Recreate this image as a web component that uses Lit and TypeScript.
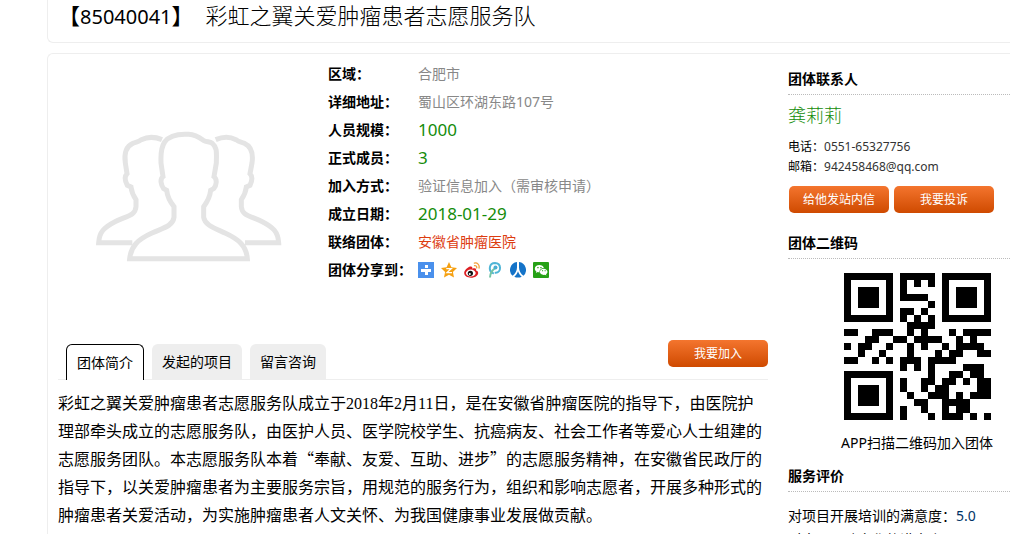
import { LitElement, html, css, svg } from "lit";
import { customElement, state } from "lit/decorators.js";

// Dark modules outside the three finder squares, listed per row.
const QR_MODULES: number[][] = [
  [8, 9, 10, 11, 12],
  [8, 10, 12],
  [8],
  [8, 9, 10, 11],
  [12],
  [8, 9, 11],
  [8, 10, 12],
  [9, 10, 11, 12],
  [0, 1, 4, 5, 6, 9, 11, 15, 17, 18, 19, 20],
  [3, 4, 7, 8, 10, 11, 12, 13, 16, 18],
  [0, 2, 3, 6, 9, 11, 14, 16, 17, 18, 19],
  [2, 5, 9, 13, 15, 16, 19, 20],
  [0, 1, 4, 6, 8, 9, 10, 12, 13, 14, 15],
  [8, 10, 12, 17, 18, 19],
  [12, 15, 16, 18, 19],
  [8, 11, 12, 14, 15, 17, 19, 20],
  [8, 11, 13, 14, 19, 20],
  [9, 12, 13, 14, 16, 18, 19, 20],
  [10, 11, 14, 15, 16, 17],
  [8, 11, 14, 16, 17],
  [8, 12, 14, 15, 16, 18, 20],
];

const FINDERS = [
  [0, 0],
  [14, 0],
  [0, 14],
];

@customElement("qr-code")
export class QrCode extends LitElement {
  static styles = css`
    :host {
      display: block;
    }
    .code {
      display: block;
      width: 147px;
      height: 147px;
    }
  `;

  render() {
    return html`<svg class="code" viewBox="0 0 21 21" shape-rendering="crispEdges" role="img" aria-label="团体二维码">
      ${FINDERS.map(
        ([x, y]) => svg`<path fill="#000" fill-rule="evenodd"
          d="M${x} ${y}h7v7h-7z M${x + 1} ${y + 1}v5h5v-5z M${x + 2} ${y + 2}h3v3h-3z" />`
      )}
      ${QR_MODULES.map((cols, y) => svg`<path fill="#000" d=${cols.map((x) => `M${x} ${y}h1v1h-1z`).join("")} />`)}
    </svg>`;
  }
}

const SHARES = [
  {
    name: "分享",
    art: svg`<rect width="16" height="16" fill="#4a90ec"/><path fill="#fff" d="M7 3h3v3H7zM7 7h6v3h-3v3H7v-3H3V7z"/><path fill="#4a90ec" d="M6 6h1v1h-1z"/>`,
  },
  {
    name: "QQ空间",
    art: svg`<path fill="#f5a011" d="M8 0l2.4 5.3 5.6.7-4.1 4 1.1 5.6L8 12.8 3 15.6 4.1 10 0 6l5.6-.7z"/><path fill="none" stroke="#fff" stroke-width="1.3" d="M5.3 6.6h5L6 10.6h5"/>`,
  },
  {
    name: "新浪微博",
    art: svg`<path fill="#dc1e22" d="M6.2 4.5C3.500 5.200.2 8.300.2 11c0 2.800 3.200 4.700 6.700 4.700 4.300 0 7.300-2.500 7.300-4.800 0-1.400-1-2.200-2.200-2.500.6-1.800-.7-2.700-3.700-1.600.4-1.700-.3-2.700-2.100-2.300z"/><ellipse cx="6.800" cy="11.100" rx="4.900" ry="3.500" fill="#fff"/><circle cx="6.400" cy="11.300" r="2.600" fill="#111"/><circle cx="5.800" cy="11.900" r="1" fill="#fff"/><path fill="none" stroke="#f2a03a" stroke-width="1.300" stroke-linecap="round" d="M10.300 1.100c3-.8 5.500 1.800 4.700 4.900M10.500 3.700c1.500-.3 2.500.8 2.200 2.200"/>`,
  },
  {
    name: "腾讯微博",
    art: svg`<path fill="none" stroke="#4fb5d6" stroke-width="2" stroke-linecap="round" d="M6 11.200C.8 8.500 2.300 1.200 8 1.100c6.500.2 6.700 9.200.6 9.700"/><path fill="none" stroke="#75c4a5" stroke-width="2" d="M3 15.500C3.200 11.500 5 8.200 8.300 6"/><circle cx="8.500" cy="5.500" r="2" fill="#49aed2"/>`,
  },
  {
    name: "人人网",
    art: svg`<path fill="#1473c8" d="M7 0v5.500C7 9 5 12 2.600 13.800A8 8 0 0 1 7 0zM9 0v5.500c0 3.500 2 6.500 4.400 8.300A8 8 0 0 0 9 0zM8 9.200c.7 2.300 1.900 4 3.700 5.500-2.300 1.200-5.100 1.200-7.400 0C6.100 13.200 7.300 11.500 8 9.200z"/>`,
  },
  {
    name: "微信",
    art: svg`<rect width="16" height="16" rx="1" fill="#26a116"/><path fill="#fff" d="M6.400 3C3.800 3 1.800 4.600 1.800 6.700c0 1.200.6 2.100 1.600 2.800L3 11l1.700-.9 1.800.3C6.300 7.700 8.600 6 10.900 6 10.500 4.200 8.600 3 6.400 3z"/><path fill="#fff" d="M10.700 6.700c-2.200 0-3.800 1.400-3.800 3.100s1.600 3.100 3.800 3.100l1.300-.2 1.400.8-.4-1.300c.9-.6 1.500-1.400 1.500-2.400 0-1.700-1.700-3.100-3.800-3.100z"/><path fill="#26a116" d="M4.300 5h1.300v1.200H4.300zM7.300 5h1.300v1.200H7.300zM9 8.200h1.100v1H9zM11.600 8.200h1.100v1h-1.100z"/>`,
  },
];

const TABS = ["团体简介", "发起的项目", "留言咨询"];

@customElement("app-root")
export class AppRoot extends LitElement {
  @state() private tab = 0;

  static styles = css`
    :host {
      display: block;
      height: 100vh;
      overflow: auto;
      scrollbar-width: none;
      background: #fff;
      color: #000;
      font-family: "Noto Sans", "Noto Sans CJK SC", sans-serif;
      font-size: 14px;
      line-height: 28px;
    }
    * {
      box-sizing: border-box;
    }
    .page {
      padding-left: 47px;
      display: flex;
      flex-direction: column;
      gap: 10px;
    }
    .panel {
      border: 1px solid #eee;
      border-right: 0;
      border-radius: 6px 0 0 6px;
    }
    .head {
      border-top: 0;
      border-top-left-radius: 0;
      padding: 0 10px 14px;
    }
    h1,
    h2,
    p,
    dl,
    dd {
      margin: 0;
    }
    h1 {
      font: 400 22px/28px "Noto Sans CJK SC", sans-serif;
      text-spacing-trim: space-all;
    }
    .num {
      font-family: "Noto Sans", sans-serif;
      font-size: 20px;
      line-height: 20px;
    }
    .title {
      font-weight: 300;
      margin-left: 12px;
    }
    .body {
      display: flex;
      gap: 20px;
      padding: 6px 0 20px 10px;
    }
    .main {
      flex: 1;
      min-width: 0;
    }
    .aside {
      width: 222px;
      flex: none;
    }
    .intro {
      display: flex;
    }
    .portrait {
      width: 270px;
      flex: none;
      padding: 60px 0 0 22px;
    }
    .people {
      display: block;
      width: 220px;
      height: 150px;
    }
    .facts {
      display: grid;
      grid-template-columns: 90px 1fr;
      flex: 1;
    }
    dt {
      font-weight: 700;
    }
    dt,
    dd {
      white-space: nowrap;
    }
    dd {
      color: #888;
    }
    .big {
      color: #148c0a;
      font-size: 17px;
    }
    a {
      color: #dd3c10;
      text-decoration: none;
    }
    .shares {
      display: flex;
      align-items: center;
      gap: 7px;
    }
    .share,
    .glyph {
      display: block;
      width: 16px;
      height: 16px;
    }
    .bar {
      display: flex;
      align-items: flex-end;
      gap: 8px;
      margin-top: 56px;
      padding-left: 8px;
      border-bottom: 1px solid #eee;
    }
    button {
      font-family: inherit;
      margin: 0;
      border: 0;
      cursor: pointer;
    }
    .tab {
      height: 35px;
      padding: 0 10px;
      border-radius: 6px 6px 0 0;
      background: #eee;
      color: #000;
      font-size: 14px;
      line-height: 35px;
    }
    .current {
      height: 36px;
      margin-bottom: -1px;
      border: 1px solid #000;
      border-bottom: 0;
      background: #fff;
    }
    .action {
      width: 100px;
      height: 27px;
      padding: 0;
      border-radius: 5px;
      background: linear-gradient(#f4752e, #cf4a00);
      color: #fff;
      font-size: 12px;
      line-height: 27px;
    }
    .join {
      margin: 0 0 12px auto;
    }
    .story {
      margin-top: 8px;
      font: 400 16px/28px "Noto Sans CJK SC", sans-serif;
      text-spacing-trim: space-all;
    }
    .digits {
      font-family: "Liberation Serif", serif;
      line-height: 16px;
    }
    h2 {
      font-size: 14px;
      line-height: 28px;
      padding-bottom: 1px;
      border-bottom: 1px dotted #bbb;
    }
    .contact {
      padding-top: 5px;
    }
    .name {
      margin: 5px 0 7px;
      color: #148c0a;
      font-size: 18px;
      font-weight: 300;
      line-height: 30px;
    }
    .line {
      font-size: 12px;
      line-height: 20px;
    }
    .value {
      color: #333;
    }
    .buttons {
      display: flex;
      gap: 5px;
      padding: 9px 0 16px 1px;
    }
    .scan {
      display: flex;
      flex-direction: column;
      align-items: center;
      gap: 9px;
      padding: 14px 0 5px 36px;
    }
    .rate {
      line-height: 24px;
    }
    .rates {
      padding-top: 12px;
    }
    .score {
      color: #003366;
    }
  `;

  render() {
    return html`
      <div class="page">
        <header class="panel head">
          <h1>【<span class="num">85040041</span>】<span class="title">彩虹之翼关爱肿瘤患者志愿服务队</span></h1>
        </header>
        <div class="panel body">
          <main class="main">
            <section class="intro">
              <div class="portrait">
                <svg class="people" viewBox="0 0 660 450" fill="none" stroke="#e4e4e4" stroke-width="15" role="img" aria-label="团体">
                  <path d="M246 59C222 49 201 51 184 59C174 67 170 65 159 70C137 80 132 101 136 129L141 161C133 169 134 181 142 196L153 201C155 218 159 226 168 239V260C166 287 142 287 105 305C72 322 58 336 56 368H157" />
                  <path d="M407 59C431 49 452 51 468 59C478 67 482 65 493 70C515 80 520 101 516 129L510 161C518 169 517 181 510 196L499 201C497 218 493 226 484 239V260C486 287 510 287 547 305C580 322 594 336 596 368H495" />
                  <path fill="#fff" d="M326 43C292 41 267 48 254 66C240 87 243 112 243 129L249 170C239 178 243 195 251 206L260 211C262 230 268 243 282 260V292C278 318 252 323 216 339C174 358 153 378 149 416H502C499 378 477 358 435 339C399 323 375 315 371 292V260C384 243 390 230 392 211L401 206C410 195 412 178 402 170L409 129C409 102 413 83 397 70C389 65 379 66 370 61C356 51 344 44 326 43Z" />
                </svg>
              </div>
              <dl class="facts">
                <dt>区域：</dt><dd>合肥市</dd>
                <dt>详细地址：</dt><dd>蜀山区环湖东路107号</dd>
                <dt>人员规模：</dt><dd class="big">1000</dd>
                <dt>正式成员：</dt><dd class="big">3</dd>
                <dt>加入方式：</dt><dd>验证信息加入（需审核申请）</dd>
                <dt>成立日期：</dt><dd class="big">2018-01-29</dd>
                <dt>联络团体：</dt><dd><a href="#">安徽省肿瘤医院</a></dd>
                <dt>团体分享到：</dt>
                <dd class="shares">
                  ${SHARES.map(
                    (s) => html`<a class="share" href="#" aria-label=${s.name}><svg class="glyph" viewBox="0 0 16 16">${s.art}</svg></a>`
                  )}
                </dd>
              </dl>
            </section>
            <nav class="bar">
              ${TABS.map(
                (t, i) => html`<button class="tab ${i === this.tab ? "current" : ""}" @click=${() => (this.tab = i)}>${t}</button>`
              )}
              <button class="action join">我要加入</button>
            </nav>
            <p class="story">彩虹之翼关爱肿瘤患者志愿服务队成立于<span class="digits">2018</span>年<span class="digits">2</span>月<span class="digits">11</span>日，是在安徽省肿瘤医院的指导下，由医院护理部牵头成立的志愿服务队，由医护人员、医学院校学生、抗癌病友、社会工作者等爱心人士组建的志愿服务团队。本志愿服务队本着“奉献、友爱、互助、进步”的志愿服务精神，在安徽省民政厅的指导下，以关爱肿瘤患者为主要服务宗旨，用规范的服务行为，组织和影响志愿者，开展多种形式的肿瘤患者关爱活动，为实施肿瘤患者人文关怀、为我国健康事业发展做贡献。</p>
          </main>
          <aside class="aside">
            <section class="contact">
              <h2>团体联系人</h2>
              <p class="name">龚莉莉</p>
              <p class="line">电话：<span class="value">0551-65327756</span></p>
              <p class="line">邮箱：<span class="value">942458468@qq.com</span></p>
              <div class="buttons">
                <button class="action">给他发站内信</button>
                <button class="action">我要投诉</button>
              </div>
            </section>
            <section>
              <h2>团体二维码</h2>
              <div class="scan">
                <qr-code></qr-code>
                <p>APP扫描二维码加入团体</p>
              </div>
            </section>
            <section>
              <h2>服务评价</h2>
              <div class="rates">
                <p class="rate">对项目开展培训的满意度：<span class="score">5.0</span></p>
                <p class="rate">对本团团队文化的满意度：</p>
              </div>
            </section>
          </aside>
        </div>
      </div>
    `;
  }
}
